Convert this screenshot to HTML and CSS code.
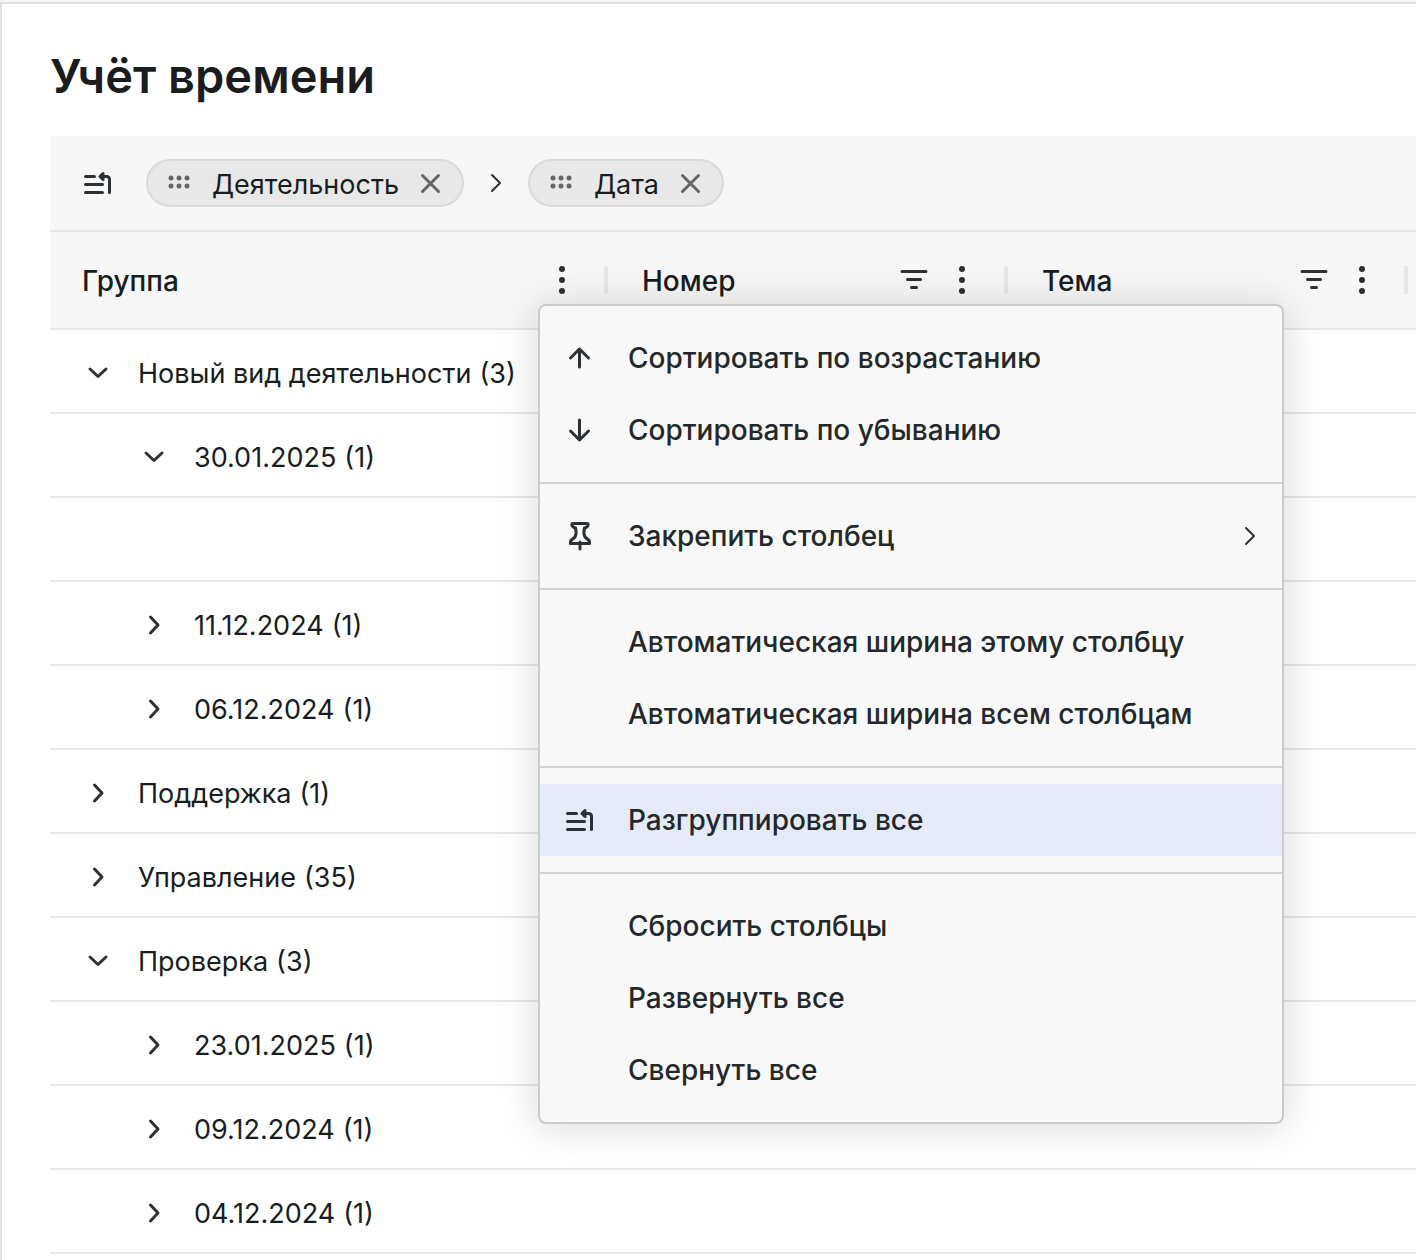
FILE: index.html
```html
<!DOCTYPE html>
<html lang="ru">
<head>
<meta charset="utf-8">
<meta name="viewport" content="width=device-width, initial-scale=1">
<title>Учёт времени</title>
<link rel="stylesheet" href="styles.css">
</head>
<body>
<svg class="sprite" aria-hidden="true">
  <symbol id="ungroup" viewBox="0 0 32 32"><path d="M3.500 9.500H12.500M3.500 17.500H20.500M3.500 25.500H20.500M20 9.500H24.500Q27.500 9.500 27.500 12.500V25.500" /><path class="solid" d="M18 9.500L21 6.500V12.500Z"/></symbol>
  <symbol id="drag" viewBox="0 0 32 32"><g class="dots"><circle cx="7" cy="11" r="2.500"/><circle cx="15" cy="11" r="2.500"/><circle cx="23" cy="11" r="2.500"/><circle cx="7" cy="19" r="2.500"/><circle cx="15" cy="19" r="2.500"/><circle cx="23" cy="19" r="2.500"/></g></symbol>
  <symbol id="close" viewBox="0 0 32 32"><path d="M7.500 8.500L23.500 24.500M23.500 8.500L7.500 24.500"/></symbol>
  <symbol id="next" viewBox="0 0 32 32"><path d="M12 8L20 16L12 24"/></symbol>
  <symbol id="right" viewBox="0 0 32 32"><path d="M12.500 9L20 17L12.500 25"/></symbol>
  <symbol id="down" viewBox="0 0 32 32"><path d="M8 13L16 20.500L24 13"/></symbol>
  <symbol id="more" viewBox="0 0 32 32"><g class="dots"><circle cx="16" cy="5" r="3"/><circle cx="16" cy="16" r="3"/><circle cx="16" cy="27" r="3"/></g></symbol>
  <symbol id="filter" viewBox="0 0 32 32"><path d="M4 7.500H28M9.500 15.500H22.500M13.500 23.500H18.500"/></symbol>
  <symbol id="asc" viewBox="0 0 32 32"><path d="M15.500 25V7M6.500 16L15.500 7L24.500 16"/></symbol>
  <symbol id="desc" viewBox="0 0 32 32"><path d="M15.500 6V25.500M6.500 17L15.500 26L24.500 17"/></symbol>
  <symbol id="pin" viewBox="0 0 32 32"><path d="M9 3.500H23Q24.500 3.500 24 5.500Q23.500 7 22 7.500L20.500 8Q19 13 21 17L24 19.500Q26 21 25.500 23.500H6.500Q6 21 8 19.500L11 17Q13 13 11.500 8L10 7.500Q8.500 7 8 5.500Q7.500 3.500 9 3.500ZM16 22V29"/></symbol>
</svg>

<main class="page">
  <h1 class="title">Учёт времени</h1>
  <section class="grid">
    <div class="groupbar">
      <svg class="icon"><use href="#ungroup"/></svg>
      <div class="chips">
        <span class="chip"><svg class="icon muted"><use href="#drag"/></svg><span class="chip-name">Деятельность</span><button class="ghost" type="button" aria-label="Убрать"><svg class="icon muted"><use href="#close"/></svg></button></span>
        <svg class="icon thin"><use href="#next"/></svg>
        <span class="chip"><svg class="icon muted"><use href="#drag"/></svg><span class="chip-name">Дата</span><button class="ghost" type="button" aria-label="Убрать"><svg class="icon muted"><use href="#close"/></svg></button></span>
      </div>
    </div>

    <table class="table">
      <colgroup><col class="col-group"><col class="col-field"><col class="col-field"><col></colgroup>
      <thead>
        <tr>
          <th class="anchor">
            <div class="head"><span class="label">Группа</span><button class="ghost" type="button" aria-label="Меню столбца"><svg class="icon"><use href="#more"/></svg></button><i class="sep"></i></div>
            <div class="menu">
              <div class="part">
                <button class="item" type="button"><svg class="icon"><use href="#asc"/></svg><span>Сортировать по возрастанию</span></button>
                <button class="item" type="button"><svg class="icon"><use href="#desc"/></svg><span>Сортировать по убыванию</span></button>
              </div>
              <div class="part">
                <button class="item" type="button"><svg class="icon"><use href="#pin"/></svg><span>Закрепить столбец</span><svg class="icon thin more"><use href="#next"/></svg></button>
              </div>
              <div class="part">
                <button class="item" type="button"><i class="icon"></i><span>Автоматическая ширина этому столбцу</span></button>
                <button class="item" type="button"><i class="icon"></i><span>Автоматическая ширина всем столбцам</span></button>
              </div>
              <div class="part">
                <button class="item active" type="button"><svg class="icon"><use href="#ungroup"/></svg><span>Разгруппировать все</span></button>
              </div>
              <div class="part">
                <button class="item" type="button"><i class="icon"></i><span>Сбросить столбцы</span></button>
                <button class="item" type="button"><i class="icon"></i><span>Развернуть все</span></button>
                <button class="item" type="button"><i class="icon"></i><span>Свернуть все</span></button>
              </div>
            </div>
          </th>
          <th><div class="head"><span class="label">Номер</span><button class="ghost" type="button" aria-label="Фильтр"><svg class="icon"><use href="#filter"/></svg></button><button class="ghost" type="button" aria-label="Меню столбца"><svg class="icon"><use href="#more"/></svg></button><i class="sep"></i></div></th>
          <th><div class="head"><span class="label">Тема</span><button class="ghost" type="button" aria-label="Фильтр"><svg class="icon"><use href="#filter"/></svg></button><button class="ghost" type="button" aria-label="Меню столбца"><svg class="icon"><use href="#more"/></svg></button><i class="sep"></i></div></th>
          <th></th>
        </tr>
      </thead>
      <tbody>
        <tr><td><div class="cell"><button class="ghost" type="button" aria-label="Свернуть"><svg class="icon"><use href="#down"/></svg></button><span class="name">Новый вид деятельности</span><span class="count">(3)</span></div></td><td></td><td></td><td></td></tr>
        <tr><td><div class="cell sub"><button class="ghost" type="button" aria-label="Свернуть"><svg class="icon"><use href="#down"/></svg></button><span class="name">30.01.2025</span><span class="count">(1)</span></div></td><td></td><td></td><td></td></tr>
        <tr><td></td><td></td><td></td><td></td></tr>
        <tr><td><div class="cell sub"><button class="ghost" type="button" aria-label="Развернуть"><svg class="icon"><use href="#right"/></svg></button><span class="name">11.12.2024</span><span class="count">(1)</span></div></td><td></td><td></td><td></td></tr>
        <tr><td><div class="cell sub"><button class="ghost" type="button" aria-label="Развернуть"><svg class="icon"><use href="#right"/></svg></button><span class="name">06.12.2024</span><span class="count">(1)</span></div></td><td></td><td></td><td></td></tr>
        <tr><td><div class="cell"><button class="ghost" type="button" aria-label="Развернуть"><svg class="icon"><use href="#right"/></svg></button><span class="name">Поддержка</span><span class="count">(1)</span></div></td><td></td><td></td><td></td></tr>
        <tr><td><div class="cell"><button class="ghost" type="button" aria-label="Развернуть"><svg class="icon"><use href="#right"/></svg></button><span class="name">Управление</span><span class="count">(35)</span></div></td><td></td><td></td><td></td></tr>
        <tr><td><div class="cell"><button class="ghost" type="button" aria-label="Свернуть"><svg class="icon"><use href="#down"/></svg></button><span class="name">Проверка</span><span class="count">(3)</span></div></td><td></td><td></td><td></td></tr>
        <tr><td><div class="cell sub"><button class="ghost" type="button" aria-label="Развернуть"><svg class="icon"><use href="#right"/></svg></button><span class="name">23.01.2025</span><span class="count">(1)</span></div></td><td></td><td></td><td></td></tr>
        <tr><td><div class="cell sub"><button class="ghost" type="button" aria-label="Развернуть"><svg class="icon"><use href="#right"/></svg></button><span class="name">09.12.2024</span><span class="count">(1)</span></div></td><td></td><td></td><td></td></tr>
        <tr><td><div class="cell sub"><button class="ghost" type="button" aria-label="Развернуть"><svg class="icon"><use href="#right"/></svg></button><span class="name">04.12.2024</span><span class="count">(1)</span></div></td><td></td><td></td><td></td></tr>
      </tbody>
    </table>
  </section>
</main>
</body>
</html>
```
FILE: styles.css
```css
* {
  box-sizing: border-box;
}

body {
  margin: 0;
  padding-top: 2px;
  background: #f7f7f7;
  color: #181d1f;
  font: 400 27px/32px Inter, "Noto Sans", sans-serif;
}

.sprite {
  position: absolute;
  width: 0;
  height: 0;
}

.page {
  min-height: calc(100vh - 2px);
  padding: 48px 0 0 48px;
  border: solid #e0e0e0;
  border-width: 2px 0 0 2px;
  background: #fff;
}

.title {
  margin: 0 0 36px;
  color: #1b1c1e;
  font-size: 47px;
  font-weight: 600;
  line-height: 48px;
}

/* Icons */
.icon {
  display: block;
  flex: none;
  width: 32px;
  height: 32px;
  color: #2b3135;
  fill: none;
  stroke: currentColor;
  stroke-width: 3;
  stroke-linecap: round;
  stroke-linejoin: round;
}

.dots {
  fill: currentColor;
  stroke: none;
}

.solid {
  fill: currentColor;
}

.muted {
  color: #646566;
}

.thin {
  stroke-width: 2;
}

.ghost {
  flex: none;
  padding: 0;
  border: 0;
  background: none;
}

/* Grouping bar */
.groupbar {
  display: flex;
  align-items: center;
  gap: 32px;
  height: 96px;
  padding: 0 32px;
  border-bottom: 2px solid #e8e8e8;
  background: #f7f7f7;
}

.chips {
  display: flex;
  align-items: center;
  gap: 16px;
}

.chip {
  display: flex;
  align-items: center;
  gap: 16px;
  height: 48px;
  padding: 0 15px 0 16px;
  border: 2px solid #dadada;
  border-radius: 24px;
  background: #e8e8e8;
}

.chip-name,
.name,
.count {
  padding-top: 4px;
}

/* Table */
.table {
  width: 100%;
  table-layout: fixed;
  border-spacing: 0;
}

.col-group {
  width: 558px;
}

.col-field {
  width: 400px;
}

.table th {
  height: 98px;
  padding: 0;
  border-bottom: 2px solid #e8e8e8;
  background: #f7f7f7;
  font-size: 28px;
  font-weight: 500;
  text-align: left;
}

.anchor {
  position: relative;
}

.head {
  display: flex;
  align-items: center;
  gap: 16px;
  padding-left: 32px;
}

th + th .head {
  padding-left: 34px;
}

.label {
  flex: 1;
  padding-top: 2px;
}

.sep {
  width: 4px;
  height: 28px;
  margin-left: 10px;
  background: #e8e8e8;
}

.table td {
  height: 84px;
  padding: 0;
  border-bottom: 2px solid #e8e8e8;
}

.cell {
  display: flex;
  align-items: center;
  padding: 2px 0 0 32px;
}

.sub {
  padding-left: 88px;
}

.name {
  margin: 0 8px 0 24px;
}

/* Column menu */
.menu {
  position: absolute;
  z-index: 1;
  top: 72px;
  left: 488px;
  width: 746px;
  border: 2px solid #cbcbcb;
  border-radius: 8px;
  background: #f8f8f8;
  box-shadow: 0 2px 40px rgba(0, 0, 0, 0.16);
}

.part {
  padding: 16px 0;
}

.part + .part {
  border-top: 2px solid #d4d4d4;
}

.item {
  display: flex;
  align-items: center;
  gap: 32px;
  width: 100%;
  height: 72px;
  padding: 0 16px 0 24px;
  border: 0;
  background: none;
  color: #23282b;
  font: inherit;
  text-align: left;
}

.more {
  margin-left: auto;
}

.active {
  background: #e4eaf8;
}
```
